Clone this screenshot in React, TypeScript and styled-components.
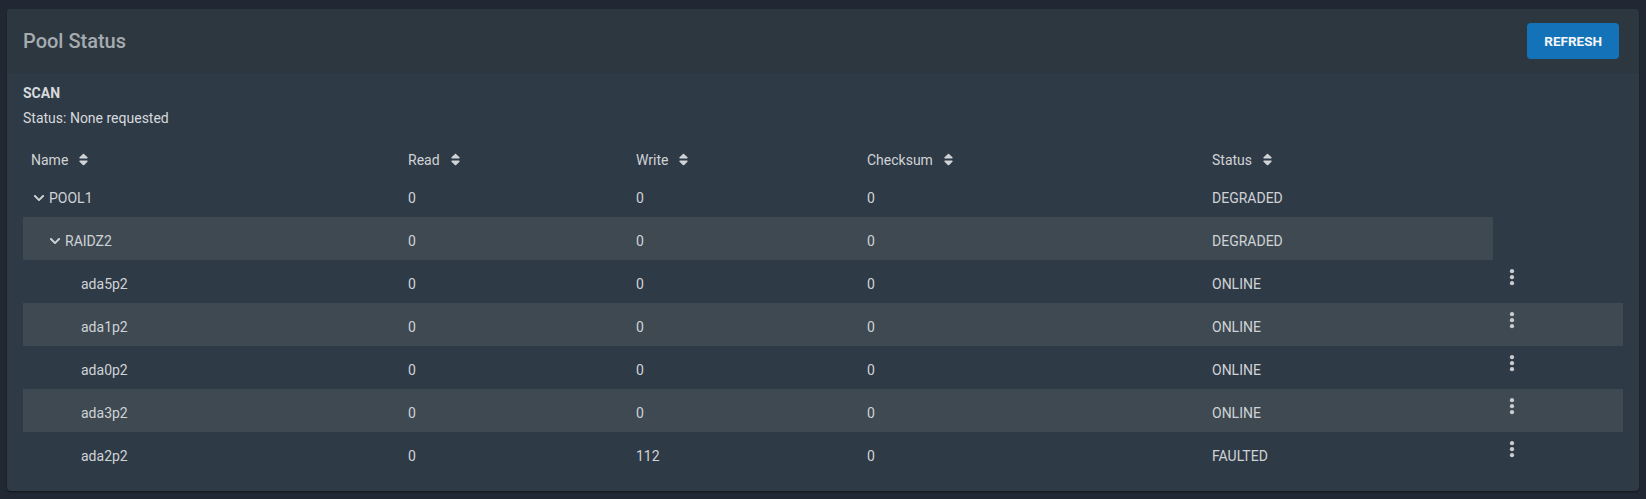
import styled, { createGlobalStyle } from 'styled-components';
import { FaSort, FaChevronDown } from 'react-icons/fa';

const GlobalStyle = createGlobalStyle`
  body {
    margin: 0;
    background-color: #212833;
    font-family: Roboto, 'Liberation Sans', sans-serif;
  }
`;

const Page = styled.div`
  padding: 9px 7px 8px;
`;

const Card = styled.div`
  background-color: #2f3a47;
  border-radius: 4px;
  overflow: hidden;
  box-shadow: 0 1px 2px rgba(0, 0, 0, 0.45);
`;

const CardHeader = styled.div`
  height: 64px;
  display: flex;
  align-items: center;
  justify-content: space-between;
  padding: 0 20px 0 16px;
  background-color: #2c3740;
`;

const Title = styled.h2`
  margin: 0;
  font-size: 20px;
  font-weight: 500;
  color: #a6abb0;
`;

const RefreshButton = styled.button`
  height: 36px;
  padding: 0 17px;
  border: none;
  border-radius: 4px;
  background-color: #1473b8;
  color: #f4f7fa;
  font-family: inherit;
  font-size: 13.5px;
  font-weight: 700;
  cursor: pointer;
`;

const CardBody = styled.div`
  padding: 10px 16px 16px;
`;

const ScanTitle = styled.div`
  font-size: 14px;
  font-weight: 700;
  line-height: 20px;
  color: #d6d9dc;
  margin-bottom: 5px;
`;

const ScanStatus = styled.div`
  font-size: 14px;
  line-height: 20px;
  color: #d6d9dc;
`;

const Table = styled.table`
  margin-top: 17px;
  width: 1600px;
  table-layout: fixed;
  border-collapse: collapse;
  font-size: 14px;
  line-height: 20px;
  color: #cfd3d6;
`;

const HeadCell = styled.th`
  padding: 5px 8px 4px;
  text-align: left;
  font-weight: 400;
  white-space: nowrap;
`;

const SortIcon = styled(FaSort)`
  margin-left: 8px;
  vertical-align: -2px;
  color: #cfd3d6;
`;

const Cell = styled.td<{ $striped?: boolean }>`
  height: 43px;
  box-sizing: border-box;
  padding: 14px 8px 9px;
  vertical-align: top;
  white-space: nowrap;
  background-color: ${(p) => (p.$striped ? '#3e4952' : 'transparent')};
`;

const ActionCell = styled(Cell)`
  padding: 9px 8px 0 15px;
`;

const NameWrap = styled.div<{ $level: number }>`
  display: flex;
  align-items: center;
  padding-left: ${(p) => p.$level * 16}px;
`;

const Toggle = styled.span`
  width: 18px;
  display: flex;
  align-items: center;
  flex-shrink: 0;
`;

const Chevron = styled(FaChevronDown)`
  margin-left: 2px;
  color: #cfd3d6;
`;

const KebabButton = styled.button`
  display: block;
  width: 8px;
  height: 18px;
  padding: 0;
  border: none;
  background: none;
  cursor: pointer;
`;

type Row = {
  name: string;
  level: number;
  expandable?: boolean;
  read: number;
  write: number;
  checksum: number;
  status: string;
  actions?: boolean;
};

const rows: Row[] = [
  { name: 'POOL1', level: 0, expandable: true, read: 0, write: 0, checksum: 0, status: 'DEGRADED' },
  { name: 'RAIDZ2', level: 1, expandable: true, read: 0, write: 0, checksum: 0, status: 'DEGRADED' },
  { name: 'ada5p2', level: 2, read: 0, write: 0, checksum: 0, status: 'ONLINE', actions: true },
  { name: 'ada1p2', level: 2, read: 0, write: 0, checksum: 0, status: 'ONLINE', actions: true },
  { name: 'ada0p2', level: 2, read: 0, write: 0, checksum: 0, status: 'ONLINE', actions: true },
  { name: 'ada3p2', level: 2, read: 0, write: 0, checksum: 0, status: 'ONLINE', actions: true },
  { name: 'ada2p2', level: 2, read: 0, write: 112, checksum: 0, status: 'FAULTED', actions: true },
];

const columns = ['Name', 'Read', 'Write', 'Checksum', 'Status'];
const widths = [377, 228, 231, 345, 289, 130];

const Kebab = () => (
  <svg width='8' height='18' viewBox='0 0 8 18'>
    <circle cx='4' cy='2.2' r='2.1' fill='#c9cdd1' />
    <circle cx='4' cy='8.2' r='2.1' fill='#c9cdd1' />
    <circle cx='4' cy='14.2' r='2.1' fill='#c9cdd1' />
  </svg>
);

export default function App() {
  return (
    <Page>
      <GlobalStyle />
      <Card>
        <CardHeader>
          <Title>Pool Status</Title>
          <RefreshButton>REFRESH</RefreshButton>
        </CardHeader>
        <CardBody>
          <ScanTitle>SCAN</ScanTitle>
          <ScanStatus>Status: None requested</ScanStatus>
          <Table>
            <colgroup>
              {widths.map((w, i) => (
                <col key={i} style={{ width: w }} />
              ))}
            </colgroup>
            <thead>
              <tr>
                {columns.map((c) => (
                  <HeadCell key={c}>
                    {c}
                    <SortIcon size={15} />
                  </HeadCell>
                ))}
                <HeadCell />
              </tr>
            </thead>
            <tbody>
              {rows.map((r, i) => {
                const striped = i % 2 === 1;
                return (
                  <tr key={r.name}>
                    <Cell $striped={striped}>
                      <NameWrap $level={r.level}>
                        <Toggle>{r.expandable && <Chevron size={12} />}</Toggle>
                        {r.name}
                      </NameWrap>
                    </Cell>
                    <Cell $striped={striped}>{r.read}</Cell>
                    <Cell $striped={striped}>{r.write}</Cell>
                    <Cell $striped={striped}>{r.checksum}</Cell>
                    <Cell $striped={striped}>{r.status}</Cell>
                    {r.actions && (
                      <ActionCell $striped={striped}>
                        <KebabButton aria-label='actions'>
                          <Kebab />
                        </KebabButton>
                      </ActionCell>
                    )}
                  </tr>
                );
              })}
            </tbody>
          </Table>
        </CardBody>
      </Card>
    </Page>
  );
}
